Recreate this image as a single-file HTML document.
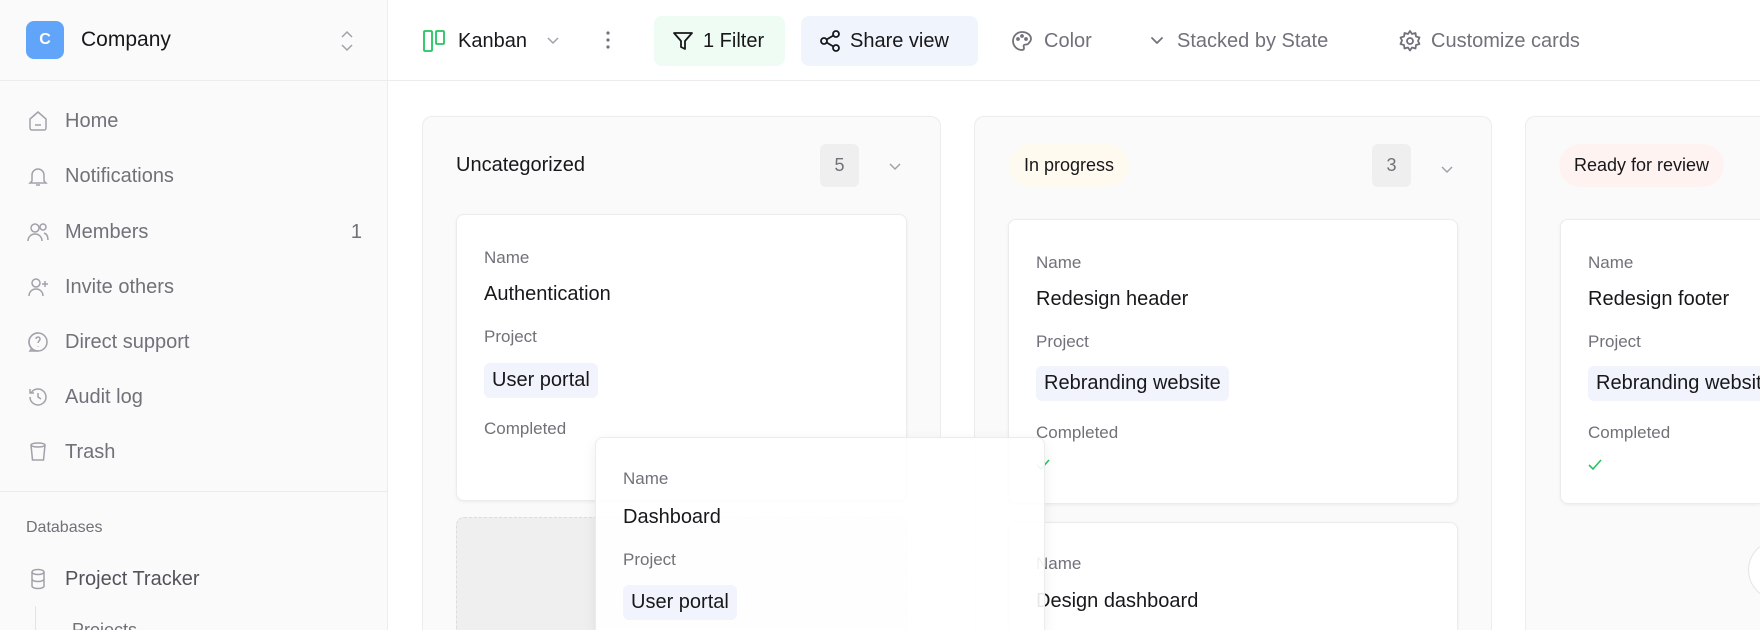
<!DOCTYPE html>
<html style="width:1760px;height:630px;overflow:hidden"><head><meta charset="utf-8"><style>
*{box-sizing:border-box;margin:0;padding:0}
body{width:1760px;height:630px;overflow:hidden;background:#fff;font-family:"Liberation Sans",Arial,sans-serif;position:relative;color:#18181b}
#w{position:absolute;left:0;top:0;width:1760px;height:630px;overflow:hidden}
.a{position:absolute}
.sb{left:0;top:0;width:388px;height:630px;background:#fafafa;border-right:1px solid #ececec}
.nav{left:26px;height:24px;display:flex;align-items:center;font-size:20px;color:#71717a}
.nav svg{width:24px;height:24px;margin-right:15px;stroke:#a1a1aa;fill:none;stroke-width:1.5}
.tb{font-size:20px;display:flex;align-items:center;height:50px;top:16px;border-radius:8px}
.tb svg{fill:none;stroke-width:1.8;stroke-linecap:round;stroke-linejoin:round}
.col{background:#fafafa;border:1px solid #ececec;border-bottom:none;border-radius:10px 10px 0 0;height:514px}
.card{background:#fff;border:1px solid #ececec;border-radius:8px;box-shadow:0 1px 3px rgba(0,0,0,.06)}
.lbl{font-size:17px;color:#71717a;position:absolute;left:27px}
.val{font-size:20px;color:#18181b;position:absolute;left:27px}
.pill{position:absolute;left:27px;height:35px;padding:0 8px;background:#f1f4fc;border-radius:6px;font-size:20px;line-height:35px}
.cnt{width:39px;height:43px;background:#efefef;border-radius:6px;font-size:18px;color:#71717a;text-align:center;line-height:43px}
.chev{width:14px;height:14px;fill:none;stroke:#a1a1aa;stroke-width:1.5}
</style></head><body><div id="w">
<div class="a sb"></div>
<div class="a" style="left:0;top:80px;width:388px;height:1px;background:#ececec"></div>
<div class="a" style="left:388px;top:80px;width:1372px;height:1px;background:#ececec"></div>
<div class="a" style="left:26px;top:21px;width:38px;height:38px;background:#60a5fa;border-radius:8px;color:#fff;font-weight:bold;font-size:16px;text-align:center;line-height:38px">C</div>
<div class="a" style="left:81px;top:28px;font-size:21px">Company</div>
<svg class="a" style="left:337px;top:29px" width="20" height="24" viewBox="0 0 20 24" fill="none" stroke="#a1a1aa" stroke-width="1.5"><path d="M5 8l5-5 5 5M5 16l5 5 5-5"/></svg>

<div class="a nav" style="top:109px"><svg viewBox="0 0 24 24"><path d="M4 10l8-7 8 7v9a2 2 0 01-2 2H6a2 2 0 01-2-2z"/><path d="M9 16h6"/></svg>Home</div>
<div class="a nav" style="top:164px"><svg viewBox="0 0 24 24"><path d="M6 17V11a6 6 0 0112 0v6l2 2H4z"/><path d="M10 21h4"/></svg>Notifications</div>
<div class="a nav" style="top:220px;width:336px"><svg viewBox="0 0 24 24"><circle cx="9" cy="8" r="4"/><path d="M2 21c0-4 3-7 7-7s7 3 7 7"/><circle cx="17" cy="7" r="3"/><path d="M18 13c3 1 4 4 4 7"/></svg>Members<span style="margin-left:auto">1</span></div>
<div class="a nav" style="top:275px"><svg viewBox="0 0 24 24"><circle cx="10" cy="8" r="4"/><path d="M3 21c0-4 3-7 7-7s7 3 7 7M19 6v6M16 9h6"/></svg>Invite others</div>
<div class="a nav" style="top:330px"><svg viewBox="0 0 24 24"><path d="M12 3a9 9 0 100 18H4l2-3"/><circle cx="12" cy="12" r="9"/><path d="M10 9a2 2 0 114 0c0 2-2 2-2 4M12 16.5v.5"/></svg>Direct support</div>
<div class="a nav" style="top:385px"><svg viewBox="0 0 24 24"><path d="M4 12a8 8 0 108-8 8 8 0 00-7 4M4 4v4h4"/><path d="M12 8v4l3 2"/></svg>Audit log</div>
<div class="a nav" style="top:440px"><svg viewBox="0 0 24 24"><ellipse cx="12" cy="5" rx="7" ry="2"/><path d="M5 5l1.5 15h11L19 5"/></svg>Trash</div>
<div class="a" style="left:0;top:491px;width:388px;height:1px;background:#ececec"></div>
<div class="a" style="left:26px;top:519px;font-size:16px;color:#71717a">Databases</div>
<div class="a nav" style="top:567px"><svg viewBox="0 0 24 24"><ellipse cx="12" cy="5" rx="6" ry="2.5"/><path d="M6 5v14c0 1.4 2.7 2.5 6 2.5s6-1.1 6-2.5V5M6 12c0 1.4 2.7 2.5 6 2.5s6-1.1 6-2.5"/></svg><span style="color:#52525b">Project Tracker</span></div>
<div class="a" style="left:35px;top:606px;width:1px;height:24px;background:#e4e4e7"></div>
<div class="a" style="left:72px;top:620px;height:10px;overflow:hidden;font-size:18px;color:#71717a;line-height:20px">Projects</div>

<!-- toolbar -->
<div class="a tb" style="left:422px"><svg width="26" height="26" viewBox="0 0 26 26" stroke="#22c55e" stroke-width="2"><rect x="2" y="3" width="8" height="20" rx="1"/><rect x="14" y="3" width="8" height="13" rx="1"/></svg><span style="margin-left:10px">Kanban</span></div>
<svg class="a chev" style="left:546px;top:34px" viewBox="0 0 14 14"><path d="M2 4l5 5 5-5"/></svg>
<svg class="a" style="left:602px;top:30px" width="12" height="20" viewBox="0 0 12 20" fill="#71717a"><circle cx="6" cy="3" r="1.6"/><circle cx="6" cy="10" r="1.6"/><circle cx="6" cy="17" r="1.6"/></svg>
<div class="a tb" style="left:654px;width:131px;background:#effcf3;padding-left:17px"><svg width="24" height="24" viewBox="0 0 24 24" stroke="#18181b"><path d="M3 4h18l-7 8v8l-4-2v-6z"/></svg><span style="margin-left:8px">1 Filter</span></div>
<div class="a tb" style="left:801px;width:177px;background:#f0f4fd;padding-left:17px"><svg width="24" height="24" viewBox="0 0 24 24" stroke="#18181b"><circle cx="18" cy="5" r="3"/><circle cx="6" cy="12" r="3"/><circle cx="18" cy="19" r="3"/><path d="M8.6 13.5l6.8 4M15.4 6.5l-6.8 4"/></svg><span style="margin-left:8px">Share view</span></div>
<div class="a tb" style="left:1010px;color:#71717a"><svg width="24" height="24" viewBox="0 0 24 24" stroke="#71717a"><path d="M12 3a9 9 0 000 18c1.5 0 2-1 2-2s-1-2 0-3 3 0 4-1 3-3 3-5c0-4-4-7-9-7z"/><circle cx="8" cy="10" r="1"/><circle cx="12" cy="7" r="1"/><circle cx="16" cy="10" r="1"/></svg><span style="margin-left:10px">Color</span></div>
<div class="a tb" style="left:1147px;color:#71717a"><svg width="20" height="20" viewBox="0 0 20 20" stroke="#71717a"><path d="M5 7l5 5 5-5"/></svg><span style="margin-left:10px">Stacked by State</span></div>
<div class="a tb" style="left:1398px;color:#71717a"><svg width="24" height="24" viewBox="0 0 24 24" stroke="#71717a"><circle cx="12" cy="12" r="3"/><path d="M12 2l2 3 3.5-1 .5 3.5 3.5 1-1.5 3.5 1.5 3-3.5 1-.5 3.5-3.5-1-2 3-2-3-3.5 1-.5-3.5-3.5-1 1.5-3.5L2.5 8.5 6 7.5 6.5 4l3.5 1z"/></svg><span style="margin-left:9px">Customize cards</span></div>

<!-- column 1 -->
<div class="a col" style="left:422px;top:116px;width:519px"></div>
<div class="a" style="left:456px;top:154px;font-size:20px;font-weight:500">Uncategorized</div>
<div class="a cnt" style="left:820px;top:144px">5</div>
<svg class="a chev" style="left:888px;top:160px" viewBox="0 0 14 14"><path d="M2 4l5 5 5-5"/></svg>
<div class="a card" style="left:456px;top:214px;width:451px;height:287px">
<div class="lbl" style="top:33px">Name</div><div class="val" style="top:68px">Authentication</div>
<div class="lbl" style="top:112px">Project</div><div class="pill" style="top:148px">User portal</div>
<div class="lbl" style="top:204px">Completed</div></div>
<div class="a" style="left:456px;top:517px;width:451px;height:113px;background:#efefef;border:1.5px dashed #dcdcdc;border-bottom:none;border-radius:8px 8px 0 0"></div>

<!-- column 2 -->
<div class="a col" style="left:974px;top:116px;width:518px"></div>
<div class="a" style="left:1009px;top:144px;height:43px;padding:0 15px;background:#fefaef;border-radius:22px;font-size:18px;line-height:43px">In progress</div>
<div class="a cnt" style="left:1372px;top:144px">3</div>
<svg class="a chev" style="left:1440px;top:163px" viewBox="0 0 14 14"><path d="M2 4l5 5 5-5"/></svg>
<div class="a card" style="left:1008px;top:219px;width:450px;height:285px">
<div class="lbl" style="top:33px">Name</div><div class="val" style="top:68px">Redesign header</div>
<div class="lbl" style="top:112px">Project</div><div class="pill" style="top:146px">Rebranding website</div>
<div class="lbl" style="top:203px">Completed</div>
<svg class="a" style="left:26px;top:238px" width="16" height="14" viewBox="0 0 16 14" fill="none" stroke="#22c55e" stroke-width="1.6"><path d="M2 7l4 4 8-9"/></svg></div>
<div class="a card" style="left:1008px;top:522px;width:450px;height:108px;border-bottom:none;border-radius:8px 8px 0 0">
<div class="lbl" style="top:31px">Name</div><div class="val" style="top:67px">Design dashboard</div></div>

<!-- column 3 -->
<div class="a col" style="left:1525px;top:116px;width:235px;border-right:none;border-radius:10px 0 0 0"></div>
<div class="a" style="left:1559px;top:144px;height:43px;padding:0 15px;background:#fef3f1;border-radius:22px;font-size:18px;line-height:43px">Ready for review</div>
<div class="a card" style="left:1560px;top:219px;width:200px;height:285px;border-right:none;border-radius:8px 0 0 8px">
<div class="lbl" style="top:33px">Name</div><div class="val" style="top:68px;white-space:nowrap">Redesign footer</div>
<div class="lbl" style="top:112px">Project</div><div class="pill" style="top:146px;white-space:nowrap">Rebranding website</div>
<div class="lbl" style="top:203px">Completed</div>
<svg class="a" style="left:26px;top:238px" width="16" height="14" viewBox="0 0 16 14" fill="none" stroke="#22c55e" stroke-width="1.6"><path d="M2 7l4 4 8-9"/></svg></div>
<div class="a" style="left:1748px;top:540px;width:30px;height:60px;border-radius:30px 0 0 30px;border:1px solid #e4e4e7;border-right:none;background:#fff"></div>

<!-- drag card -->
<div class="a" style="left:595px;top:437px;width:450px;height:193px;background:rgba(255,255,255,.9);border:1px solid #ececec;border-bottom:none;border-radius:8px 8px 0 0;box-shadow:0 4px 14px rgba(0,0,0,.07)">
<div class="lbl" style="top:31px">Name</div><div class="val" style="top:68px">Dashboard</div>
<div class="lbl" style="top:112px">Project</div><div class="pill" style="top:147px">User portal</div></div>
</div></body></html>
